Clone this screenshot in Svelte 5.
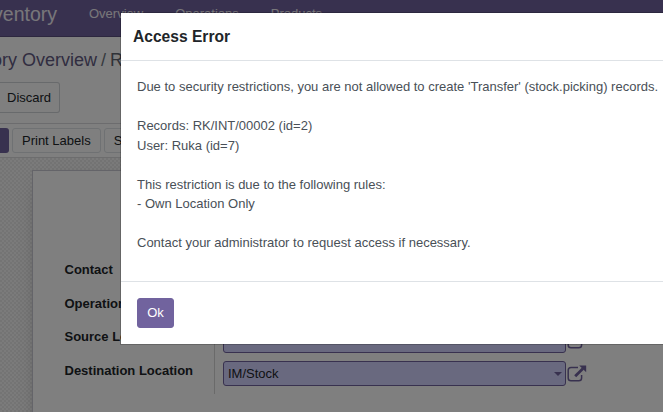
<script lang="ts">
	const menus = ["Overview", "Operations", "Products"];

	const fields = [
		{ label: "Contact", value: "" },
		{ label: "Operation Type", value: "" },
		{ label: "Source Location", value: "" },
		{ label: "Destination Location", value: "IM/Stock" },
	];

	const message = `Due to security restrictions, you are not allowed to create 'Transfer' (stock.picking) records.

Records: RK/INT/00002 (id=2)
User: Ruka (id=7)

This restriction is due to the following rules:
- Own Location Only

Contact your administrator to request access if necessary.`;
</script>

<div class="client">
	<header class="navbar">
		<div class="brand"><span>ventory</span></div>
		<nav class="menus">
			{#each menus as menu}
				<span>{menu}</span>
			{/each}
		</nav>
	</header>

	<div class="control-panel">
		<div class="breadcrumb">
			<div class="crumb"><span>ory Overview</span></div>
			<span class="sep">/</span>
			<span class="current">R</span>
		</div>
		<button class="discard">Discard</button>
	</div>

	<div class="statusbar">
		<span class="primary"></span>
		<button>Print Labels</button>
		<button class="scrap">Scrap</button>
	</div>

	<main class="form-view">
		<section class="sheet">
			<div class="labels">
				{#each fields as field}
					<div class="row">{field.label}</div>
				{/each}
			</div>
			<div class="values">
				{#each fields as field}
					<div class="row">
						<div class="input">
							<span>{field.value}</span>
							<i class="caret"></i>
						</div>
						<svg class="external" viewBox="0 0 20 17" width="20" height="17">
							<path d="M11 2.5H4Q1.2 2.5 1.2 5.3V13Q1.2 15.8 4 15.8H11.8Q14.6 15.8 14.6 13V10" fill="none" stroke="currentColor" stroke-width="1.5" />
							<path d="M8.2 11.2L16 3.4" fill="none" stroke="currentColor" stroke-width="2.8" />
							<path d="M12.2 0.4H19.2V7.2Z" fill="currentColor" />
						</svg>
					</div>
				{/each}
			</div>
		</section>
	</main>

	<div class="backdrop"></div>

	<div class="modal" role="dialog">
		<div class="modal-header">
			<h4>Access Error</h4>
		</div>
		<div class="modal-body">{message}</div>
		<div class="modal-footer">
			<button>Ok</button>
		</div>
	</div>
</div>

<style>
	:global(body) {
		margin: 0;
		overflow: hidden;
	}

	.client {
		position: relative;
		display: flex;
		flex-direction: column;
		width: 663px;
		height: 412px;
		overflow: hidden;
		background: #fff;
		color: #212529;
		font: 13px/1.5 "Liberation Sans", Arial, sans-serif;
	}

	.client *,
	.client {
		box-sizing: border-box;
	}

	button {
		font: inherit;
	}

	.navbar {
		display: flex;
		flex-shrink: 0;
		height: 37px;
		background: #71639e;
		border-bottom: 1px solid #5a4f7f;
		color: #f0eef5;
		line-height: 27px;
	}

	.brand {
		display: flex;
		justify-content: flex-end;
		width: 57px;
		margin-right: 32px;
		padding-top: 1px;
		font-size: 19.5px;
	}

	.menus {
		display: flex;
		gap: 32px;
	}

	.control-panel {
		display: flex;
		flex-direction: column;
		align-items: flex-start;
		flex-shrink: 0;
		height: 87px;
		padding-top: 10px;
		border-bottom: 1px solid #d9d9dc;
	}

	.breadcrumb {
		display: flex;
		font-size: 18px;
		line-height: 27px;
		color: #625a82;
	}

	.crumb {
		display: flex;
		justify-content: flex-end;
		width: 97px;
		white-space: nowrap;
	}

	.sep {
		width: 13px;
		padding-left: 4px;
		color: #6c757d;
	}

	.current {
		color: #5f6470;
	}

	.discard {
		height: 31px;
		margin-top: 8px;
		padding: 0 8px 0 7px;
		border: 1px solid #d0d4d8;
		border-left: 0;
		border-radius: 0 3px 3px 0;
		background: #fff;
		color: #212529;
	}

	.statusbar {
		display: flex;
		align-items: center;
		gap: 4px;
		flex-shrink: 0;
		height: 34px;
		border-bottom: 1px solid #dadadd;
	}

	.statusbar button {
		height: 25px;
		padding: 0 9px;
		border: 1px solid #dee2e6;
		border-radius: 3px;
		background: #fff;
		color: #212529;
	}

	.statusbar .scrap {
		margin-left: -1px;
	}

	.statusbar .primary {
		width: 9px;
		height: 25px;
		margin-right: -1px;
		border-radius: 0 3px 3px 0;
		background: #71639e;
	}

	.form-view {
		flex: 1;
		min-height: 0;
		padding: 12px 0 0 32px;
		background: repeating-conic-gradient(#e8e8e8 0 25%, #f6f6f6 0 50%) 0 0 / 4px 4px;
	}

	.sheet {
		display: flex;
		height: 300px;
		padding: 83px 0 0 31.5px;
		border: 1px solid #c8c8d3;
		border-right: 0;
		background: #fff;
		box-shadow: 0 5px 20px -15px #000;
	}

	.labels {
		width: 149.5px;
		height: 140px;
		font-weight: bold;
	}

	.labels .row {
		height: 33.7px;
		padding-top: 6px;
		white-space: nowrap;
	}

	.values {
		display: flex;
		flex-direction: column;
		width: 380px;
		height: 140px;
		padding-left: 8px;
		border-left: 1px solid #d4d4d4;
	}

	.values .row {
		display: flex;
		flex-shrink: 0;
		align-items: center;
		gap: 1px;
		height: 33px;
		padding-top: 5px;
	}

	.values .row:first-child {
		margin-top: 1.2px;
	}

	.input {
		display: flex;
		align-items: center;
		justify-content: space-between;
		width: 343px;
		height: 25px;
		padding: 1px 3px 0 4px;
		border: 1px solid #71639e;
		border-radius: 3px;
		background: #d2d2ff;
	}

	.caret {
		border: 4px solid transparent;
		border-top-color: #71639e;
		border-bottom: 0;
	}

	.external {
		color: #71639e;
	}

	.backdrop {
		position: absolute;
		inset: 0;
		background: rgba(0, 0, 0, 0.5);
	}

	.modal {
		position: absolute;
		top: 12px;
		left: 120px;
		width: 650px;
		height: 333px;
		border: 1px solid rgba(0, 0, 0, 0.2);
		background: #fff;
		background-clip: padding-box;
	}

	.modal-header {
		height: 48px;
		padding: 11px 12px;
		border-bottom: 1px solid #dee2e6;
	}

	h4 {
		margin: 0;
		font-size: 15.6px;
		line-height: 25px;
	}

	.modal-body {
		height: 220px;
		padding: 16px;
		color: #495057;
		white-space: pre;
	}

	.modal-footer {
		padding: 16px;
		border-top: 1px solid #dee2e6;
	}

	.modal-footer button {
		width: 37px;
		height: 30px;
		padding: 0;
		border: 1px solid #71639e;
		border-radius: 3px;
		background: #71639e;
		color: #fff;
	}
</style>
